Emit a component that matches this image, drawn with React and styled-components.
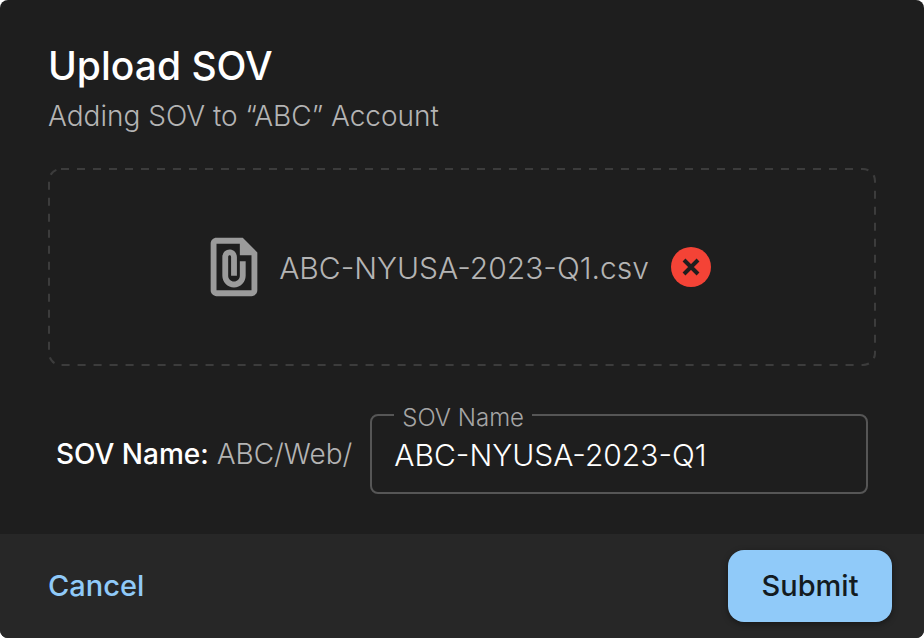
import { useState } from "react";
import styled, { createGlobalStyle } from "styled-components";
import { MdFilePresent } from "react-icons/md";

const GlobalStyle = createGlobalStyle`
  * {
    box-sizing: border-box;
  }

  body {
    margin: 0;
    background-color: #fff;
    font-family: Inter, "Liberation Sans", sans-serif;
    font-weight: 300;
  }
`;

const Dialog = styled.form`
  display: flex;
  flex-direction: column;
  min-height: 100vh;
  overflow: hidden;
  color: #fff;
  background-color: #1e1e1e;
  border-radius: 8px;
`;

const Content = styled.div`
  display: flex;
  flex-direction: column;
  flex: 1;
  padding: 40px 48px;
`;

const Title = styled.h1`
  margin: 0;
  font-size: 39px;
  line-height: 52px;
  font-weight: 500;
`;

const Subtitle = styled.p`
  margin: 4px 0 0;
  font-size: 28px;
  line-height: 40px;
  color: #b4b4b4;
`;

// css dashed borders have no control over the dash length
const dashes = encodeURIComponent(
  "<svg xmlns='http://www.w3.org/2000/svg' width='100%' height='100%'><rect width='100%' height='100%' rx='13' fill='none' stroke='#3c3c3c' stroke-width='4' stroke-dasharray='8 8'/></svg>"
);

const DropZone = styled.div`
  display: flex;
  align-items: center;
  justify-content: center;
  gap: 10px;
  min-height: 198px;
  margin-top: 32px;
  padding-right: 2px;
  border-radius: 13px;
  background-image: url("data:image/svg+xml,${dashes}");
`;

const FileIcon = styled(MdFilePresent)`
  width: 70px;
  height: 70px;
  color: #9b9b9b;
`;

const FileName = styled.span`
  padding-top: 2px;
  font-size: 30px;
  line-height: 40px;
  color: #b4b4b4;
`;

const RemoveButton = styled.button`
  display: flex;
  padding: 12px;
  border: none;
  border-radius: 50%;
  background: none;
  cursor: pointer;
`;

const NameRow = styled.div`
  display: flex;
  align-items: center;
  gap: 18px;
  margin-top: 48px;
  padding: 0 8px;
`;

const Path = styled.span`
  font-size: 28px;
  line-height: 40px;
  color: #b4b4b4;
  white-space: nowrap;

  strong {
    font-weight: 500;
    color: #fff;
  }
`;

const Field = styled.div`
  position: relative;
  flex: 1;
  min-width: 0;
`;

const FieldLabel = styled.label`
  position: absolute;
  top: -10px;
  left: 24px;
  padding: 0 8px;
  font-size: 24px;
  line-height: 28px;
  color: #a5a5a5;
  background-color: #1e1e1e;
`;

const FieldInput = styled.input`
  display: block;
  width: 100%;
  height: 80px;
  padding: 2px 22px 0;
  border: 2px solid #565656;
  border-radius: 8px;
  outline: none;
  font: inherit;
  font-size: 30px;
  color: #fff;
  background: none;
`;

const Footer = styled.div`
  display: flex;
  align-items: center;
  justify-content: space-between;
  padding: 16px 32px;
  background-color: #272727;
`;

const Button = styled.button`
  height: 72px;
  min-width: ${({ bg }) => (bg ? "164px" : "0")};
  padding: 0 16px 2px;
  border: none;
  border-radius: 16px;
  font: inherit;
  font-size: 29px;
  font-weight: 500;
  color: ${({ color }) => color};
  background-color: ${({ bg }) => bg || "transparent"};
  box-shadow: ${({ bg }) => (bg ? "0 2px 6px rgba(0, 0, 0, 0.4)" : "none")};
  cursor: pointer;
`;

function RemoveIcon() {
  return (
    <svg width="40" height="40" viewBox="0 0 40 40" aria-hidden="true">
      <circle cx="20" cy="20" r="20" fill="#f44336" />
      <path d="M13 13l14 14M27 13l-14 14" stroke="#1e1e1e" strokeWidth="4" />
    </svg>
  );
}

export default function App() {
  const [name, setName] = useState("ABC-NYUSA-2023-Q1");

  return (
    <>
      <GlobalStyle />
      <Dialog onSubmit={(e) => e.preventDefault()}>
        <Content>
          <Title>Upload SOV</Title>
          <Subtitle>Adding SOV to “ABC” Account</Subtitle>
          <DropZone>
            <FileIcon />
            <FileName>ABC-NYUSA-2023-Q1.csv</FileName>
            <RemoveButton type="button" aria-label="Remove file">
              <RemoveIcon />
            </RemoveButton>
          </DropZone>
          <NameRow>
            <Path>
              <strong>SOV Name:</strong> ABC/Web/
            </Path>
            <Field>
              <FieldInput
                id="sov-name"
                value={name}
                onChange={(e) => setName(e.target.value)}
              />
              <FieldLabel htmlFor="sov-name">SOV Name</FieldLabel>
            </Field>
          </NameRow>
        </Content>
        <Footer>
          <Button type="button" color="#90caf9">
            Cancel
          </Button>
          <Button type="submit" color="#131b21" bg="#90caf9">
            Submit
          </Button>
        </Footer>
      </Dialog>
    </>
  );
}
